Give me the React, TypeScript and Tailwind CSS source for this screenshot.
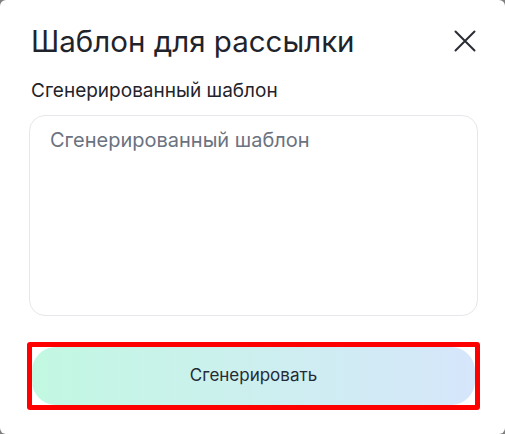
import React from "react";

export default function App() {
  return (
    <div className="h-[434px] w-[505px] bg-[#7f7f7f]" style={{ fontFamily: "Inter, 'Noto Sans', sans-serif" }}>
      <div className="flex h-full flex-col rounded-[6px] bg-white px-[25px] pt-[23px]">
        <div className="flex items-center justify-between pl-[6px] pr-[3px]">
          <h2 className="text-[29.5px] leading-[36px] font-normal text-[#1f232b]">Шаблон для рассылки</h2>
          <button className="flex h-[24px] w-[24px] items-center justify-center text-[#2a2d35]">
            <svg width="24" height="24" viewBox="0 0 24 24" fill="none" stroke="currentColor" strokeWidth="2" strokeLinecap="round">
              <path d="M2.5 2.5l19 19M21.5 2.5l-19 19" />
            </svg>
          </button>
        </div>
        <label className="mt-[20px] pl-[6px] text-[19px] leading-[24px] text-[#1f232b]">Сгенерированный шаблон</label>
        <textarea
          className="mt-[12px] ml-[4px] h-[201px] w-[449px] resize-none rounded-[16px] border border-[#e5e7eb] px-[20px] pt-[11px] pb-[14px] text-[20px] leading-[26px] text-[#1f232b] outline-none placeholder:text-[#6b7280]"
          placeholder="Сгенерированный шаблон"
        />
        <div className="mt-[26px] ml-[2px] rounded-[3px] border-[5px] border-[#ff0000]">
          <button className="flex h-[58px] w-full items-center justify-center rounded-[24px] bg-gradient-to-r from-[#c2f8e2] to-[#d6e6fb] text-[17px] text-[#252a36]">
            Сгенерировать
          </button>
        </div>
      </div>
    </div>
  );
}
